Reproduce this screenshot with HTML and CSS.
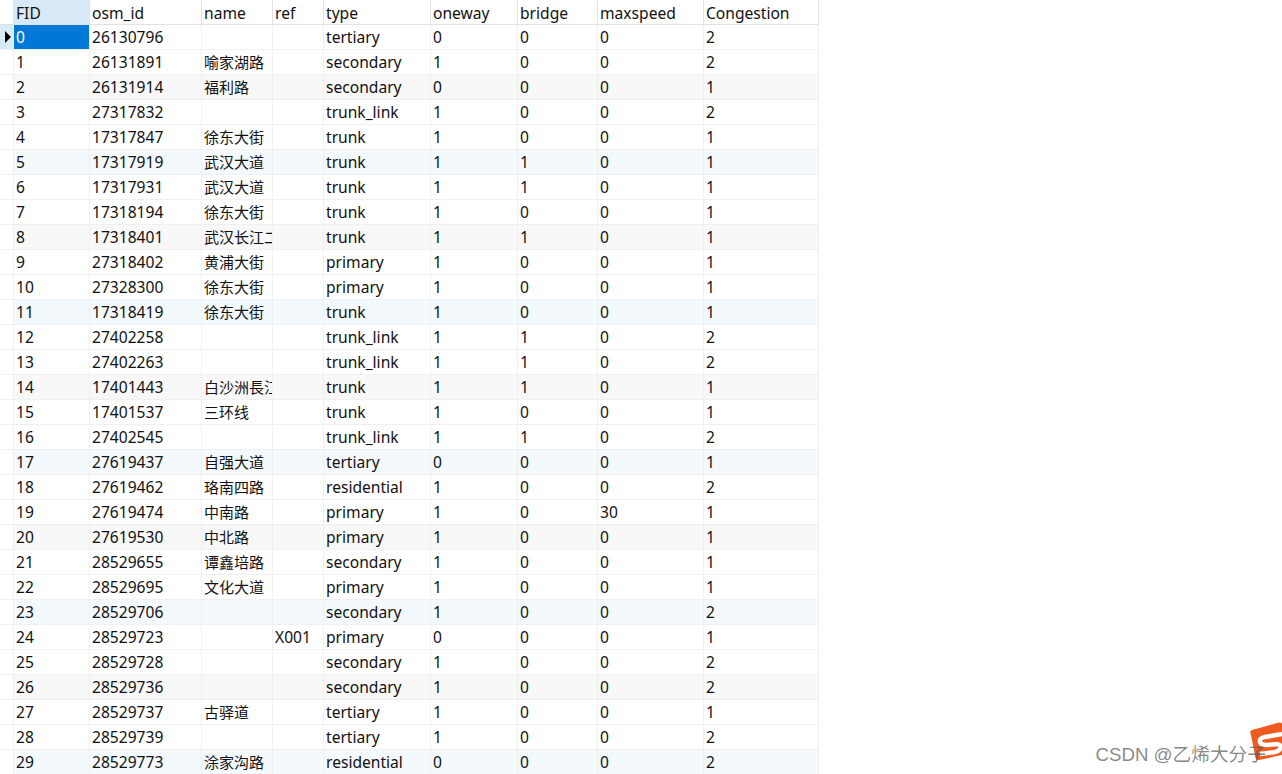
FILE: index.html
```html
<!DOCTYPE html>
<html lang="zh">
<head>
<meta charset="utf-8">
<title>Attribute table</title>
<link rel="stylesheet" href="styles.css">
</head>
<body>
<table class="grid">
<colgroup><col class="c0"><col class="c1"><col class="c2"><col class="c3"><col class="c4"><col class="c5"><col class="c6"><col class="c7"><col class="c8"><col class="c9"></colgroup>
<thead><tr><th class="ind"></th><th class="active">FID</th><th>osm_id</th><th>name</th><th>ref</th><th>type</th><th>oneway</th><th>bridge</th><th>maxspeed</th><th>Congestion</th></tr></thead>
<tbody>
<tr><td class="ind ind-on"><span class="arrow"></span></td><td class="sel">0</td><td>26130796</td><td></td><td></td><td>tertiary</td><td>0</td><td>0</td><td>0</td><td>2</td></tr>
<tr><td class="ind"></td><td>1</td><td>26131891</td><td class="cn">喻家湖路</td><td></td><td>secondary</td><td>1</td><td>0</td><td>0</td><td>2</td></tr>
<tr class="gray"><td class="ind"></td><td>2</td><td>26131914</td><td class="cn">福利路</td><td></td><td>secondary</td><td>0</td><td>0</td><td>0</td><td>1</td></tr>
<tr><td class="ind"></td><td>3</td><td>27317832</td><td></td><td></td><td>trunk_link</td><td>1</td><td>0</td><td>0</td><td>2</td></tr>
<tr><td class="ind"></td><td>4</td><td>17317847</td><td class="cn">徐东大街</td><td></td><td>trunk</td><td>1</td><td>0</td><td>0</td><td>1</td></tr>
<tr class="blue"><td class="ind"></td><td>5</td><td>17317919</td><td class="cn">武汉大道</td><td></td><td>trunk</td><td>1</td><td>1</td><td>0</td><td>1</td></tr>
<tr><td class="ind"></td><td>6</td><td>17317931</td><td class="cn">武汉大道</td><td></td><td>trunk</td><td>1</td><td>1</td><td>0</td><td>1</td></tr>
<tr><td class="ind"></td><td>7</td><td>17318194</td><td class="cn">徐东大街</td><td></td><td>trunk</td><td>1</td><td>0</td><td>0</td><td>1</td></tr>
<tr class="gray"><td class="ind"></td><td>8</td><td>17318401</td><td class="cn"><div class="clip">武汉长江二桥</div></td><td></td><td>trunk</td><td>1</td><td>1</td><td>0</td><td>1</td></tr>
<tr><td class="ind"></td><td>9</td><td>27318402</td><td class="cn">黄浦大街</td><td></td><td>primary</td><td>1</td><td>0</td><td>0</td><td>1</td></tr>
<tr><td class="ind"></td><td>10</td><td>27328300</td><td class="cn">徐东大街</td><td></td><td>primary</td><td>1</td><td>0</td><td>0</td><td>1</td></tr>
<tr class="blue"><td class="ind"></td><td>11</td><td>17318419</td><td class="cn">徐东大街</td><td></td><td>trunk</td><td>1</td><td>0</td><td>0</td><td>1</td></tr>
<tr><td class="ind"></td><td>12</td><td>27402258</td><td></td><td></td><td>trunk_link</td><td>1</td><td>1</td><td>0</td><td>2</td></tr>
<tr><td class="ind"></td><td>13</td><td>27402263</td><td></td><td></td><td>trunk_link</td><td>1</td><td>1</td><td>0</td><td>2</td></tr>
<tr class="gray"><td class="ind"></td><td>14</td><td>17401443</td><td class="cn"><div class="clip">白沙洲長江大桥</div></td><td></td><td>trunk</td><td>1</td><td>1</td><td>0</td><td>1</td></tr>
<tr><td class="ind"></td><td>15</td><td>17401537</td><td class="cn">三环线</td><td></td><td>trunk</td><td>1</td><td>0</td><td>0</td><td>1</td></tr>
<tr><td class="ind"></td><td>16</td><td>27402545</td><td></td><td></td><td>trunk_link</td><td>1</td><td>1</td><td>0</td><td>2</td></tr>
<tr class="blue"><td class="ind"></td><td>17</td><td>27619437</td><td class="cn">自强大道</td><td></td><td>tertiary</td><td>0</td><td>0</td><td>0</td><td>1</td></tr>
<tr><td class="ind"></td><td>18</td><td>27619462</td><td class="cn">珞南四路</td><td></td><td>residential</td><td>1</td><td>0</td><td>0</td><td>2</td></tr>
<tr><td class="ind"></td><td>19</td><td>27619474</td><td class="cn">中南路</td><td></td><td>primary</td><td>1</td><td>0</td><td>30</td><td>1</td></tr>
<tr class="gray"><td class="ind"></td><td>20</td><td>27619530</td><td class="cn">中北路</td><td></td><td>primary</td><td>1</td><td>0</td><td>0</td><td>1</td></tr>
<tr><td class="ind"></td><td>21</td><td>28529655</td><td class="cn">谭鑫培路</td><td></td><td>secondary</td><td>1</td><td>0</td><td>0</td><td>1</td></tr>
<tr><td class="ind"></td><td>22</td><td>28529695</td><td class="cn">文化大道</td><td></td><td>primary</td><td>1</td><td>0</td><td>0</td><td>1</td></tr>
<tr class="blue"><td class="ind"></td><td>23</td><td>28529706</td><td></td><td></td><td>secondary</td><td>1</td><td>0</td><td>0</td><td>2</td></tr>
<tr><td class="ind"></td><td>24</td><td>28529723</td><td></td><td>X001</td><td>primary</td><td>0</td><td>0</td><td>0</td><td>1</td></tr>
<tr><td class="ind"></td><td>25</td><td>28529728</td><td></td><td></td><td>secondary</td><td>1</td><td>0</td><td>0</td><td>2</td></tr>
<tr class="gray"><td class="ind"></td><td>26</td><td>28529736</td><td></td><td></td><td>secondary</td><td>1</td><td>0</td><td>0</td><td>2</td></tr>
<tr><td class="ind"></td><td>27</td><td>28529737</td><td class="cn">古驿道</td><td></td><td>tertiary</td><td>1</td><td>0</td><td>0</td><td>1</td></tr>
<tr><td class="ind"></td><td>28</td><td>28529739</td><td></td><td></td><td>tertiary</td><td>1</td><td>0</td><td>0</td><td>2</td></tr>
<tr class="blue"><td class="ind"></td><td>29</td><td>28529773</td><td class="cn">涂家沟路</td><td></td><td>residential</td><td>0</td><td>0</td><td>0</td><td>2</td></tr>
</tbody>
</table>
<svg class="sogou" width="33" height="44" viewBox="0 0 33 44" aria-hidden="true">
  <path d="M3 10 L30 2.5 Q33 2 33 4 L33 35 L10 40 Q7 40.5 6.5 38 L1.5 13 Q1 10.5 3 10 Z" fill="#ee5a1f"/>
  <path d="M33 14 L16 17 Q10 18 11 22 Q12 25 18 25 L28 24 Q33 25 31 29 Q30 31 26 32 L11 34" fill="none" stroke="#fff" stroke-width="4.5"/>
</svg>
<div class="mark">CSDN @乙烯大分子</div>
</body>
</html>
```
FILE: styles.css
```css
html, body {
  margin: 0;
  padding: 0;
  background: #fff;
  height: 774px;
  overflow: hidden;
}
body {
  position: relative;
  font-family: "Noto Sans", "Noto Sans CJK SC", sans-serif;
  font-size: 15.6px;
  color: #111;
}
.grid {
  border-collapse: separate;
  border-spacing: 0;
  table-layout: fixed;
  width: 819px;
}
.c0 { width: 14px; }
.c1 { width: 76px; }
.c2 { width: 112px; }
.c3 { width: 71px; }
.c4 { width: 51px; }
.c5 { width: 107px; }
.c6 { width: 87px; }
.c7 { width: 80px; }
.c8 { width: 106px; }
.c9 { width: 115px; }
th, td {
  height: 25px;
  box-sizing: border-box;
  padding: 0 0 0 2px;
  font-weight: 400;
  text-align: left;
  white-space: nowrap;
  overflow: hidden;
  line-height: 24px;
  border-right: 1px solid #f0f0f0;
  border-bottom: 1px solid #f0f0f0;
}
th {
  padding-top: 2px;
  line-height: 22px;
  border-right-color: #e2e2e2;
  border-bottom-color: #e2e2e2;
}
th.active { background: #d8e9f8; }
td.cn { font-size: 15px; }
.ind { background: #fff; padding: 0; }
.ind-on { background: #d8e9f8; }
.arrow {
  display: block;
  width: 0;
  height: 0;
  margin-left: 5px;
  border-left: 6px solid #000;
  border-top: 6px solid transparent;
  border-bottom: 6px solid transparent;
}
.sel { background: #0078d7; color: #fff; }
.gray td:not(.ind) { background: #f8f8f8; }
.blue td:not(.ind) { background: #f4f9fd; }
.clip { overflow: hidden; }
.mark {
  position: absolute;
  right: 16px;
  top: 743px;
  font-family: "Liberation Sans", "Noto Sans CJK SC", sans-serif;
  font-size: 18.7px;
  line-height: 24px;
  color: rgba(90, 90, 90, 0.72);
  white-space: nowrap;
}
.sogou {
  position: absolute;
  left: 1249px;
  top: 720px;
}
```
